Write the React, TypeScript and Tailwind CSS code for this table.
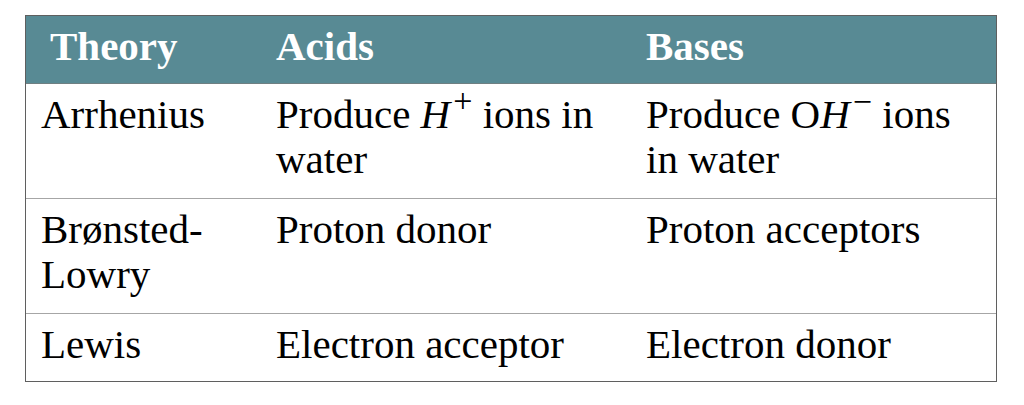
import React from "react";

const font = { fontFamily: '"Liberation Serif", "DejaVu Serif", serif' };

function Row({ a, b, c, last }: { a: React.ReactNode; b: React.ReactNode; c: React.ReactNode; last?: boolean }) {
  const pad = last ? "pt-[8px] pb-[14px]" : "pt-[8px] pb-[16px]";
  return (
    <div className={`grid grid-cols-[235px_370px_1fr] ${last ? "" : "border-b border-[#a6a6a6]"}`}>
      <div className={`pl-[15px] ${pad}`}>{a}</div>
      <div className={`pl-[15px] pr-2 ${pad}`}>{b}</div>
      <div className={`pl-[15px] pr-2 ${pad}`}>{c}</div>
    </div>
  );
}

export default function App() {
  return (
    <div className="w-[1024px] h-[405px] bg-white pt-[15px] pl-[25px]" style={font}>
      <div className="w-[972px] border border-[#5f5f5f] text-[41px] leading-[45px] text-black">
        <div className="grid grid-cols-[235px_370px_1fr] bg-[#588a94] border-b border-[#6f7f82] font-bold text-white h-[68px]">
          <div className="pl-[24px] pt-[8px]">Theory</div>
          <div className="pl-[15px] pt-[8px]">Acids</div>
          <div className="pl-[15px] pt-[8px]">Bases</div>
        </div>
        <Row
          a="Arrhenius"
          b={
            <>
              Produce <i>H</i>
              <span className="inline-block align-baseline text-[34px] leading-none relative -top-[16px] ml-[3px]">+</span> ions in water
            </>
          }
          c={
            <>
              Produce O<i>H</i>
              <span className="inline-block align-baseline text-[34px] leading-none relative -top-[15px] ml-[3px]">−</span> ions in water
            </>
          }
        />
        <Row a={<>Brønsted-<br />Lowry</>} b="Proton donor" c="Proton acceptors" />
        <Row a="Lewis" b="Electron acceptor" c="Electron donor" last />
      </div>
    </div>
  );
}
